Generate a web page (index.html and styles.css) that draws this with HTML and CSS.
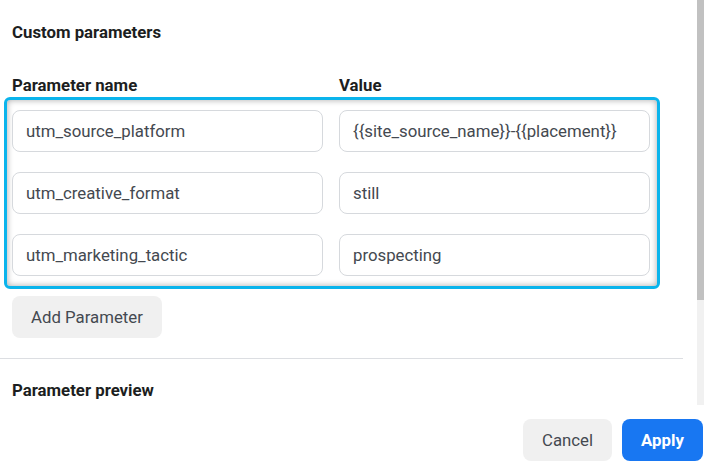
FILE: index.html
```html
<!DOCTYPE html>
<html lang="en">
<head>
  <meta charset="UTF-8" />
  <meta name="viewport" content="width=device-width, initial-scale=1.0"/>
  <title>Custom parameters</title>
  <link rel="stylesheet" href="styles.css">
</head>
<body>

  <div class="panel">
    <div class="content">
      <h3>Custom parameters</h3>

      <div class="labels">
        <div>Parameter name</div>
        <div>Value</div>
      </div>

      <div class="param-box">
        <input type="text" value="utm_source_platform" readonly />
        <input type="text" value="{{site_source_name}}-{{placement}}" readonly />
        <input type="text" value="utm_creative_format" readonly />
        <input type="text" value="still" readonly />
        <input type="text" value="utm_marketing_tactic" readonly />
        <input type="text" value="prospecting" readonly />
      </div>

      <button class="btn btn-grey add-btn">Add Parameter</button>

      <div class="divider"></div>

      <h3 class="preview-title">Parameter preview</h3>
    </div>

    <div class="scrollbar">
      <div class="thumb"></div>
    </div>
  </div>

  <div class="footer">
    <button class="btn btn-grey cancel-btn">Cancel</button>
    <button class="btn btn-blue apply-btn">Apply</button>
  </div>

</body>
</html>
```

FILE: styles.css
```css
:root {
  --text-color: #1c1e21;
  --input-text: #444950;
  --border-color: #d6d9dd;
  --grey-btn: #f0f0f0;
  --accent-color: #1877f2;
  --highlight: #0ab4ec;
  --text-size: 16.8px;
}

* {
  margin: 0;
  padding: 0;
  box-sizing: border-box;
}

body {
  margin: 0;
  width: 704px;
  height: 471px;
  overflow: hidden;
  background: #fff;
  font-family: Roboto, "Liberation Sans", sans-serif;
  color: var(--text-color);
}

.panel {
  display: flex;
  height: 405px;
}

.content {
  flex: 1;
  padding: 22px 14px 0 12px;
}

h3 {
  font-size: var(--text-size);
  line-height: 20px;
  font-weight: 700;
  color: var(--text-color);
}

.labels {
  display: grid;
  grid-template-columns: 311px 311px;
  column-gap: 16px;
  margin-top: 33px;
  font-size: var(--text-size);
  line-height: 20px;
  font-weight: 700;
}

.param-box {
  display: grid;
  grid-template-columns: 311px 311px;
  column-gap: 16px;
  row-gap: 20px;
  width: max-content;
  margin: 2px 0 0 -8px;
  padding: 10px 7px 10px 5px;
  border: 3px solid var(--highlight);
  border-radius: 6px;
  box-shadow: inset 0 0 6px rgba(0, 0, 0, 0.35);
}

input[type="text"] {
  height: 42px;
  padding: 0 13px;
  border: 1px solid var(--border-color);
  border-radius: 8px;
  background: #fff;
  font-family: Roboto, "Liberation Sans", sans-serif;
  font-size: var(--text-size);
  color: var(--input-text);
  outline: none;
}

.btn {
  height: 42px;
  border: none;
  border-radius: 8px;
  font-family: Roboto, "Liberation Sans", sans-serif;
  font-size: var(--text-size);
  cursor: pointer;
}

.btn-grey {
  background: var(--grey-btn);
  color: var(--input-text);
}

.btn-blue {
  background: var(--accent-color);
  color: #fff;
  font-weight: 700;
}

.add-btn {
  display: block;
  width: 150px;
  margin-top: 7px;
}

.divider {
  height: 1px;
  margin: 20px 0 0 -12px;
  background: #dcdee2;
}

.preview-title {
  margin-top: 21px;
}

.scrollbar {
  width: 7px;
  background: #f1f1f1;
}

.thumb {
  height: 300px;
  background: #c1c1c1;
}

.footer {
  display: flex;
  justify-content: flex-end;
  gap: 10px;
  padding: 14px 1px 0 0;
}

.cancel-btn {
  width: 89px;
}

.apply-btn {
  width: 81px;
}
```
